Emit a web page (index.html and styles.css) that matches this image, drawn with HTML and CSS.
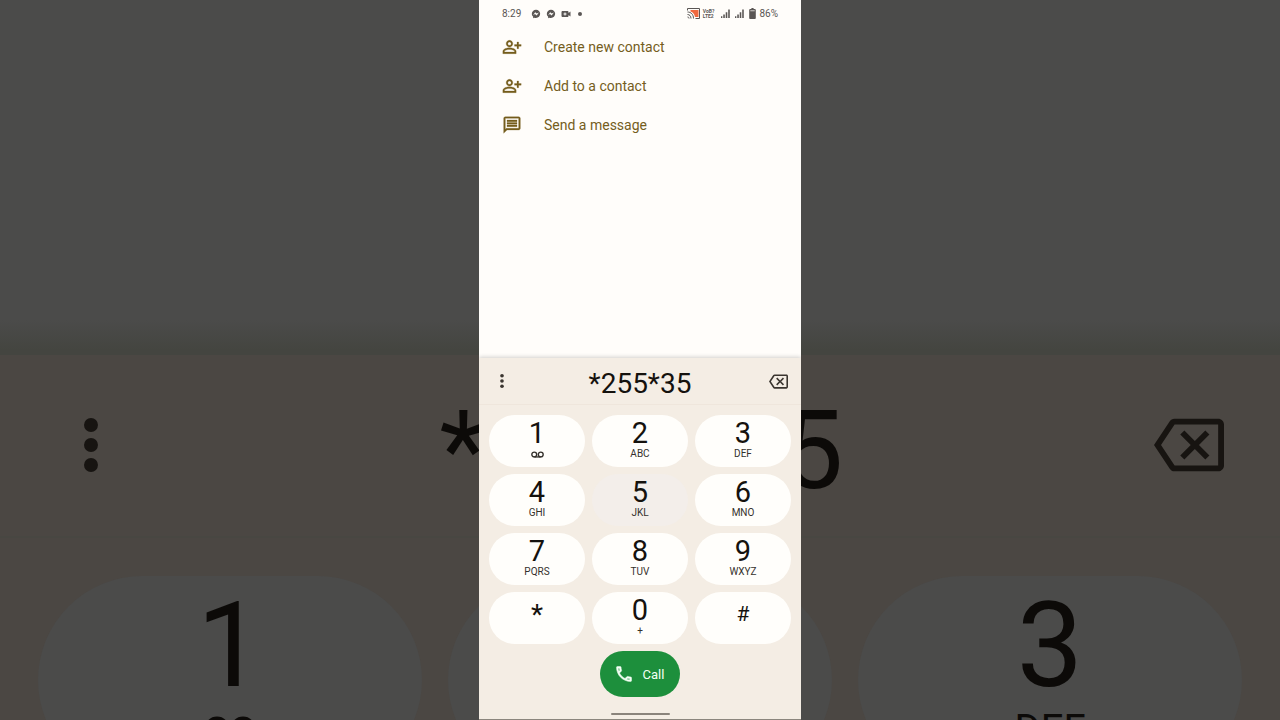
FILE: index.html
```html
<!DOCTYPE html>
<html lang="en">
<head>
<meta charset="utf-8">
<title>Phone</title>
<meta name="viewport" content="width=device-width, initial-scale=1">
<link rel="stylesheet" href="styles.css">
</head>
<body>
<svg class="sprite" aria-hidden="true">
  <symbol id="person-add" viewBox="0 0 24 24"><path d="M15.39 14.56C13.71 13.7 11.53 13 9 13s-4.71.7-6.39 1.56C1.61 15.07 1 16.1 1 17.22V20h16v-2.78c0-1.12-.61-2.15-1.61-2.66zM15 18H3v-.78c0-.38.2-.72.52-.88C4.71 15.73 6.63 15 9 15s4.29.73 5.48 1.34c.32.16.52.5.52.88V18zM9 12c2.21 0 4-1.79 4-4s-1.79-4-4-4-4 1.79-4 4 1.79 4 4 4zm0-6c1.1 0 2 .9 2 2s-.9 2-2 2-2-.9-2-2 .9-2 2-2zm11 3V6h-2v3h-3v2h3v3h2v-3h3V9z" stroke="currentColor" stroke-width=".3"/></symbol>
  <symbol id="chat" viewBox="0 0 24 24"><path d="M4 4h16v12H5.17L4 17.17V4m0-2c-1.1 0-1.99.9-1.99 2L2 22l4-4h14c1.1 0 2-.9 2-2V4c0-1.1-.9-2-2-2H4zm2 10h12v2H6v-2zm0-3h12v2H6V9zm0-3h12v2H6V6z" stroke="currentColor" stroke-width=".3"/></symbol>
  <symbol id="more" viewBox="0 0 24 24"><circle cx="12" cy="5.700" r="2.200"/><circle cx="12" cy="12" r="2.200"/><circle cx="12" cy="18.300" r="2.200"/></symbol>
  <symbol id="backspace" viewBox="0 0 24 24"><path d="M22 3H7c-.69 0-1.23.35-1.59.88L0 12l5.41 8.11c.36.53.9.89 1.59.89h15c1.1 0 2-.9 2-2V5c0-1.1-.9-2-2-2zm0 16H7.07L2.4 12l4.66-7H22v14zm-11.59-2L14 13.41 17.59 17 19 15.59 15.41 12 19 8.41 17.59 7 14 10.59 10.41 7 9 8.41 12.59 12 9 15.59z"/></symbol>
  <symbol id="voicemail" viewBox="0 0 24 12"><g fill="none" stroke="currentColor" stroke-width="2.500"><circle cx="6" cy="6" r="4.500"/><circle cx="18" cy="6" r="4.500"/><path d="M6 10.500h12"/></g></symbol>
  <symbol id="call" viewBox="0 0 24 24"><path d="M6.54 5c.06.89.21 1.76.45 2.59l-1.2 1.2c-.41-1.2-.67-2.47-.76-3.79h1.51m9.86 12.02c.85.24 1.72.39 2.6.45v1.49c-1.32-.09-2.59-.35-3.8-.75l1.2-1.19M7.5 3H4c-.55 0-1 .45-1 1 0 9.39 7.61 17 17 17 .55 0 1-.45 1-1v-3.49c0-.55-.45-1-1-1-1.24 0-2.45-.2-3.57-.57-.1-.04-.21-.05-.31-.05-.26 0-.51.1-.71.29l-2.2 2.2c-2.83-1.45-5.15-3.76-6.59-6.59l2.2-2.2c.28-.28.36-.67.25-1.02C8.7 6.45 8.5 5.25 8.5 4c0-.55-.45-1-1-1z" stroke="currentColor" stroke-width=".6"/></symbol>
  <symbol id="messenger" viewBox="0 0 24 24"><path fill-rule="evenodd" d="M12 2C6.300 2 2 6.100 2 11.600c0 3 1.200 5.400 3.200 7.100V22l3.100-1.200c1.100.4 2.400.5 3.700.5 5.700 0 10-4.100 10-9.700S17.700 2 12 2zM5 15l5-7 4 3 5-2.500-5.500 7L9.500 12z"/></symbol>
  <symbol id="signal" viewBox="0 0 20 20"><path d="M0 16h3v4H0zM5 12h3.500v8H5zM10.500 7H14v13h-3.500zM16 1h3.500v19H16z"/></symbol>
</svg>

<div class="backdrop" aria-hidden="true">
  <div class="backdrop-top"></div>
  <div class="backdrop-head">
    <svg class="backdrop-more"><use href="#more"/></svg>
    <span class="backdrop-number">*255*35</span>
    <svg class="backdrop-erase"><use href="#backspace"/></svg>
  </div>
  <div class="backdrop-keys">
    <div class="backdrop-key"><span class="backdrop-digit">1</span><svg class="backdrop-voicemail"><use href="#voicemail"/></svg></div>
    <div class="backdrop-key"></div>
    <div class="backdrop-key"><span class="backdrop-digit">3</span><span class="backdrop-letters">DEF</span></div>
  </div>
</div>

<main class="phone">
  <header class="status">
    <div class="status-group">
      <time class="clock">8:29</time>
      <svg class="notice"><use href="#messenger"/></svg>
      <svg class="notice"><use href="#messenger"/></svg>
      <svg class="notice" viewBox="0 0 20 20"><path fill-rule="evenodd" d="M3 4h10c1 0 2 1 2 2v2l4-3v10l-4-3v2c0 1-1 2-2 2H3c-1 0-2-1-2-2V6c0-1 1-2 2-2zm4 3v2H5v2h2v2h2v-2h2V9H9V7z"/></svg>
      <span class="more-dot"></span>
    </div>
    <div class="status-group">
      <svg class="cast" viewBox="0 0 26 22"><path d="M7 4h16v14h-7C15 12 12 9 7 7z" fill="#f0683f"/><path d="M1 5V1h24v20h-8M1 8c7 0 12 5 12 13M1 13c4 0 7 3 7 8M1 18c2 0 3 1 3 3" fill="none" stroke="#5a5654" stroke-width="2"/></svg>
      <span class="volte"><span>VoB?</span><span>LTE2</span></span>
      <svg class="bars"><use href="#signal"/></svg>
      <svg class="bars"><use href="#signal"/></svg>
      <svg class="battery" viewBox="0 0 12 20"><path d="M4 0h4v2h2c1 0 2 1 2 2v14c0 1-1 2-2 2H2c-1 0-2-1-2-2V4c0-1 1-2 2-2h2z"/><path d="M2 4h8v2H2z" fill="#c9c5c2"/></svg>
      <span class="charge">86%</span>
    </div>
  </header>

  <nav class="actions">
    <button class="action" type="button"><svg class="icon"><use href="#person-add"/></svg>Create new contact</button>
    <button class="action" type="button"><svg class="icon"><use href="#person-add"/></svg>Add to a contact</button>
    <button class="action" type="button"><svg class="icon"><use href="#chat"/></svg>Send a message</button>
  </nav>

  <section class="dialer">
    <div class="entry">
      <button class="tool" type="button" aria-label="More options"><svg class="more-icon"><use href="#more"/></svg></button>
      <input class="number" type="text" aria-label="Phone number" value="*255*35">
      <button class="tool" type="button" aria-label="Backspace"><svg class="erase-icon"><use href="#backspace"/></svg></button>
    </div>
    <div class="keys">
      <button class="key" type="button"><span class="digit">1</span><span class="letters"><svg class="voicemail"><use href="#voicemail"/></svg></span></button>
      <button class="key" type="button"><span class="digit">2</span><span class="letters">ABC</span></button>
      <button class="key" type="button"><span class="digit">3</span><span class="letters">DEF</span></button>
      <button class="key" type="button"><span class="digit">4</span><span class="letters">GHI</span></button>
      <button class="key pressed" type="button"><span class="digit">5</span><span class="letters">JKL</span></button>
      <button class="key" type="button"><span class="digit">6</span><span class="letters">MNO</span></button>
      <button class="key" type="button"><span class="digit">7</span><span class="letters">PQRS</span></button>
      <button class="key" type="button"><span class="digit">8</span><span class="letters">TUV</span></button>
      <button class="key" type="button"><span class="digit">9</span><span class="letters">WXYZ</span></button>
      <button class="key" type="button"><span class="star">*</span></button>
      <button class="key" type="button"><span class="digit">0</span><span class="letters">+</span></button>
      <button class="key" type="button"><span class="hash">#</span></button>
    </div>
    <button class="call" type="button"><svg class="icon"><use href="#call"/></svg>Call</button>
    <div class="home-bar"></div>
  </section>
</main>
</body>
</html>
```
FILE: styles.css
```css
* { box-sizing: border-box; }

body {
  margin: 0;
  height: 100vh;
  display: grid;
  grid-template: 100vh / 100%;
  overflow: hidden;
  background: #4b4b4a;
  font-family: Roboto, "Liberation Sans", sans-serif;
}

button, input {
  margin: 0;
  padding: 0;
  border: 0;
  background: none;
  color: inherit;
  font: inherit;
}

svg { display: block; flex: none; fill: currentColor; }
.sprite { position: absolute; width: 0; height: 0; }

/* Enlarged, dimmed dial pad behind the phone */
.backdrop {
  grid-area: 1 / 1;
  display: flex;
  flex-direction: column;
  overflow: hidden;
  background: #4b4743;
  color: #0c0a08;
}
.backdrop-top {
  flex: none;
  height: 355px;
  background: linear-gradient(#4b4b4a 320px, #444540 350px);
}
.backdrop-head {
  flex: none;
  height: 183px;
  padding: 0 56px 2px 53px;
  display: flex;
  align-items: center;
  justify-content: space-between;
  border-bottom: 2px solid #484742;
}
.backdrop-more { width: 76px; height: 76px; color: #171411; }
.backdrop-erase { width: 70px; height: 70px; color: #171411; }
.backdrop-number { padding-top: 12px; font-size: 110px; line-height: 120px; }
.backdrop-keys {
  flex: none;
  display: grid;
  grid-template-columns: repeat(3, 1fr);
  gap: 26px;
  padding: 38px 38px 0;
}
.backdrop-key {
  height: 208px;
  padding-top: 10px;
  border-radius: 104px;
  background: #4b4b4a;
  display: flex;
  flex-direction: column;
  align-items: center;
}
.backdrop-digit { font-size: 118px; line-height: 120px; }
.backdrop-letters { font-size: 40px; line-height: 48px; }
.backdrop-voicemail { width: 52px; height: 26px; margin-top: 10px; }

.phone {
  grid-area: 1 / 1;
  justify-self: center;
  width: 322px;
  max-width: 100%;
  display: flex;
  flex-direction: column;
  background: #fffdfa;
  border-bottom: 1px solid #8b867d;
  z-index: 1;
}

.status {
  height: 27px;
  padding: 0 23px;
  display: flex;
  align-items: center;
  justify-content: space-between;
  color: #5a5654;
  font-size: 10px;
  line-height: 12px;
}
.status-group { display: flex; align-items: center; gap: 5px; }
.clock { margin-right: 5px; }
.notice { width: 10px; height: 10px; }
.more-dot { width: 4px; height: 4px; margin-left: 2px; border-radius: 50%; background: currentColor; }
.cast { width: 13px; height: 11px; }
.volte {
  display: flex;
  flex-direction: column;
  margin: 0 2px 0 -2px;
  font-size: 5px;
  font-weight: 700;
  line-height: 5px;
}
.bars { width: 9px; height: 9px; }
.battery { width: 7px; height: 11px; }
.charge { margin-left: -2px; }

.actions { padding: 0 23px; color: #755d1d; }
.action {
  width: 100%;
  height: 39px;
  display: flex;
  align-items: center;
  gap: 22px;
  font-size: 14px;
  line-height: 20px;
  text-align: left;
}
.icon { width: 20px; height: 20px; }

.dialer {
  margin-top: auto;
  display: flex;
  flex-direction: column;
  align-items: center;
  background: #f4ede4;
  box-shadow: 0 -1px 4px #0000002e;
  clip-path: inset(-8px 0 0 0);
  color: #15120e;
}
.entry {
  width: 100%;
  height: 47px;
  padding: 0 13px;
  display: flex;
  align-items: center;
  border-bottom: 1px solid #efe6dc;
}
.tool {
  width: 20px;
  height: 24px;
  display: grid;
  place-items: center;
  color: #3a352f;
}
.more-icon { width: 20px; height: 20px; }
.erase-icon { width: 19px; height: 19px; }
.number {
  flex: 1;
  min-width: 0;
  height: 44px;
  padding-top: 4px;
  font-size: 28px;
  line-height: 40px;
  text-align: center;
  outline: 0;
}
.keys {
  width: 100%;
  padding: 10px 10px 0;
  display: grid;
  grid-template-columns: repeat(3, 1fr);
  gap: 7px;
}
.key {
  height: 52px;
  padding-top: 3px;
  border-radius: 26px;
  background: #fffefb;
  display: flex;
  flex-direction: column;
  align-items: center;
}
.pressed { background: #f3eeea; }
.digit { font-size: 29px; line-height: 30px; }
.letters { height: 12px; display: flex; align-items: center; font-size: 10px; line-height: 12px; color: #35312c; }
.voicemail { width: 13px; height: 7px; }
.star { font-size: 28px; line-height: 40px; }
.hash { font-size: 21px; line-height: 38px; }
.call {
  width: 80px;
  height: 46px;
  margin-top: 7px;
  padding-right: 2px;
  display: flex;
  align-items: center;
  justify-content: center;
  gap: 9px;
  border-radius: 23px;
  background: #1d8f3c;
  color: #f4fff5;
  font-size: 13px;
}
.home-bar { width: 59px; height: 2px; margin: 16px 0 4px; border-radius: 1px; background: #8a837b; }
```
